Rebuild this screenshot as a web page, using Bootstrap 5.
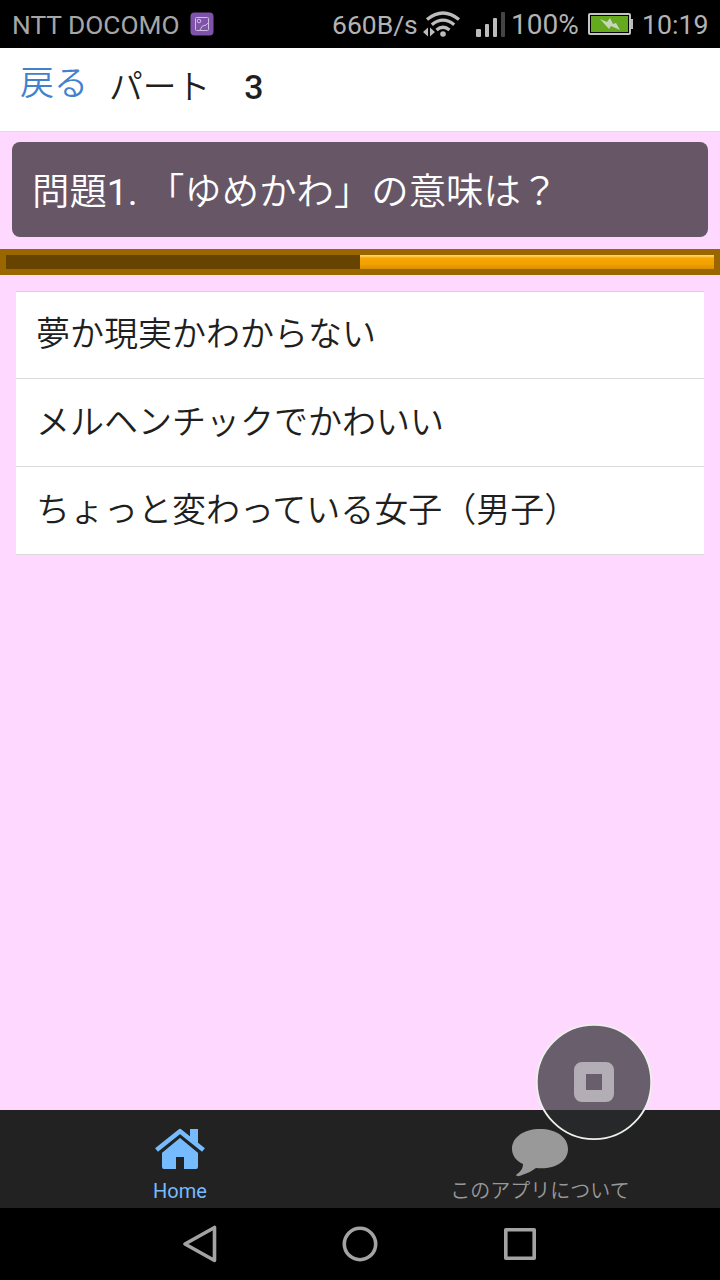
<!DOCTYPE html>
<html lang="ja">
<head>
<meta charset="utf-8">
<meta name="viewport" content="width=device-width, initial-scale=1">
<title>パート 3</title>
<link rel="stylesheet" href="https://cdn.jsdelivr.net/npm/bootstrap@5.3.0/dist/css/bootstrap.min.css">
<style>
  body { font-family: Roboto, "Noto Sans CJK JP", sans-serif; background: #fed8ff; color: #1f1f21; height: 1280px; overflow: hidden; }
  svg { display: block; flex: none; }
  .status-bar { height: 48px; background: #000; color: #b3b3b3; font-size: 26.7px; line-height: 50px; white-space: nowrap; padding: 0 12px; }
  .status-bar span { padding-top: 2px; }
  .status-bar .carrier { font-size: 26.3px; color: #a6a6a6; width: 168px; margin-right: 10px; }
  .status-bar .rate { font-size: 26.5px; width: 91px; }
  .status-bar .level { font-size: 28px; width: 77px; }
  .status-bar .clock { width: 66px; margin-left: 9px; }
  .toolbar { height: 84px; background: #fff; border-bottom: 1px solid #ddd; font-size: 34px; padding-left: 20px; }
  .toolbar a { color: #4282cc; line-height: 71px; width: 89px; }
  .toolbar h1 { font-size: 33.8px; font-weight: 500; line-height: 79px; }
  .toolbar a, .toolbar .jp, .question, .answers .list-group-item, .tab-bar .jp { font-weight: 350; }
  .question { margin: 10px 12px 12px; height: 95px; border-radius: 8px; background: #665666; color: #fff; font-size: 37.4px; line-height: 101px; padding-left: 20px; white-space: pre; }
  .question .number { font-weight: 400; }
  .timer { height: 26px; border: 6px solid #996600; border-radius: 0; background: #664400; }
  .timer .progress-bar { background: linear-gradient(#ffd060 0 1px, #fbb935 2px, #f6a803 3px, #f2a000 9px, #d99000 14px); }
  .answers { margin: 16px 16px 0; }
  .answers .list-group-item { height: 88px; font-size: 34px; line-height: 87px; padding: 0 20px; color: #1f1f21; border: 0; border-bottom: 1px solid #d9d9d9; border-radius: 0; }
  .answers .list-group-item:first-child { border-top: 1px solid #d9d0d9; line-height: 85px; }
  .tab-bar { height: 98px; background: #222; font-size: 20px; color: #999; }
  .tab-bar .caption { line-height: 24px; }
  .tab-bar .active-tab { color: #77bbff; }
  .system-nav { height: 72px; background: #000; padding: 0 100px; }
  .assist { position: absolute; right: 68px; bottom: 139px; }
</style>
</head>
<body class="d-flex flex-column position-relative">
  <div class="status-bar d-flex align-items-center">
    <span class="carrier">NTT DOCOMO</span>
    <svg width="24" height="24" viewBox="0 0 24 24"><rect x=".5" y=".5" width="23" height="23" rx="4" fill="#8053aa"/><g fill="none" stroke="#d0bddf" stroke-width="1"><rect x="5.500" y="5.500" width="13" height="13" rx="1"/><circle cx="9" cy="9" r="1.800"/><path d="M10 18q2-5 4-4.500T18 11"/></g></svg>
    <span class="rate ms-auto">660B/s</span>
    <svg width="40" height="28" viewBox="0 0 40 28"><g fill="none" stroke="#bcbcbc" stroke-width="3.300"><path d="M4 9.500Q20-3.500 36 9.500"/><path d="M8.800 14.700Q20 5.500 31.200 14.700"/><path d="M13.500 20Q20 14.500 26.500 20"/></g><g fill="#bcbcbc"><circle cx="20" cy="24" r="2.800"/><path d="M0 22l5-4.500v9zM12 22l-5-4.500v9z"/></g></svg>
    <svg width="29" height="26" viewBox="0 0 29 26" style="margin:0 6px 0 13px"><g fill="#bcbcbc"><rect x="0" y="18" width="5" height="8" rx="1"/><rect x="9" y="13" width="4" height="13" rx="1"/><rect x="17" y="7" width="4" height="19" rx="1"/></g><rect x="25" y="1" width="4" height="25" rx="1" fill="#444"/></svg>
    <span class="level">100%</span>
    <svg width="45" height="24" viewBox="0 0 45 24"><rect x="1" y="2" width="41" height="20" rx="1" fill="#000" stroke="#c4c4c4" stroke-width="2"/><rect x="3" y="4" width="37" height="16" fill="#65aa1e"/><path d="M43 7h2v10h-2z" fill="#bbb"/><path d="M12 7l7 3 3-4 3 6 3-1 4 7-9-4-2 3z" fill="#c8d4bc"/></svg>
    <span class="clock">10:19</span>
  </div>

  <header class="toolbar d-flex">
    <a href="#" class="text-decoration-none">戻る</a>
    <h1 class="m-0"><span class="jp">パート</span>　3</h1>
  </header>

  <main class="flex-grow-1">
    <div class="question">問題<span class="number">1. </span>「ゆめかわ」の意味は？</div>
    <div class="progress timer justify-content-end">
      <div class="progress-bar" style="width:50%"></div>
    </div>
    <div class="list-group answers">
      <a class="list-group-item" href="#">夢か現実かわからない</a>
      <a class="list-group-item" href="#">メルヘンチックでかわいい</a>
      <a class="list-group-item" href="#">ちょっと変わっている女子（男子）</a>
    </div>
  </main>

  <nav class="tab-bar row g-0 text-center">
    <div class="col-6 active-tab d-flex flex-column align-items-center">
      <svg width="52" height="50" viewBox="-1 0 52 50" style="margin:18px 0 1px"><g fill="#77bbff"><path d="M25 9L7 24v15q0 2 2 2h12V29h8v12h12q2 0 2-2V24z"/></g><path d="M2 24L25 5l23 19" fill="none" stroke="#222" stroke-width="7.500"/><path d="M1.500 22L25 3.200l23.500 18.800" fill="none" stroke="#77bbff" stroke-width="4.600" stroke-linejoin="round"/><path d="M35 1h8v16l-8-6.500z" fill="#77bbff"/></svg>
      <span class="caption">Home</span>
    </div>
    <div class="col-6 d-flex flex-column align-items-center">
      <svg width="56" height="50" viewBox="0 0 56 50" style="margin:18px 0 1px"><path d="M28 1C12 1 0 9 0 21c0 6 4 12 11 15 0 5-3 8-7 11 1 2 4 1 6 0 6-2 10-4 14-7 18 2 32-6 32-19C56 9 44 1 28 1z" fill="#999"/></svg>
      <span class="caption jp">このアプリについて</span>
    </div>
  </nav>

  <footer class="system-nav d-flex">
    <svg width="520" height="72" viewBox="100 0 520 72"><g fill="none" stroke="#a3a3a3" stroke-width="3.600" stroke-linejoin="round"><path d="M185 36l29.500-16.500v33z"/><circle cx="360" cy="36" r="15.700"/><rect x="505.800" y="21.800" width="28.400" height="28.400"/></g></svg>
  </footer>

  <svg class="assist" width="116" height="118" viewBox="0 0 116 118"><circle cx="58" cy="59" r="57.200" fill="#282b2d" fill-opacity=".7"/><circle cx="58" cy="59" r="57.200" fill="none" stroke="#eef0ea" stroke-width="1.800"/><rect x="44" y="45" width="28" height="28" rx="2" fill="none" stroke="#b3adb6" stroke-width="12" stroke-linejoin="round"/></svg>
  <script src="https://cdn.jsdelivr.net/npm/bootstrap@5.3.0/dist/js/bootstrap.bundle.min.js"></script>
</body>
</html>
